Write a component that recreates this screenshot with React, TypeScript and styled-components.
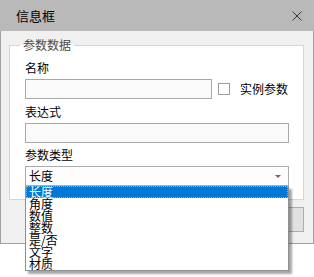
import React from "react";
import styled, { createGlobalStyle } from "styled-components";

const GlobalStyle = createGlobalStyle`
  html, body {
    margin: 0;
    padding: 0;
    background: #ffffff;
  }
  body {
    font-family: "Noto Sans CJK SC", "Noto Sans", sans-serif;
    font-size: 12px;
    color: #000;
  }
  * { box-sizing: border-box; }
`;

const TYPES = ["长度", "角度", "数值", "整数", "是/否", "文字", "材质"];

const App: React.FC = () => {
  return (
    <>
      <GlobalStyle />
      <Page>
        <Window>
          <TitleBar>
            <Title>信息框</Title>
            <CloseButton aria-label="close">
              <svg width="10" height="10" viewBox="0 0 10 10">
                <path d="M0.5 0.5 L9.5 9.5 M9.5 0.5 L0.5 9.5" stroke="#333" strokeWidth="1" />
              </svg>
            </CloseButton>
          </TitleBar>
          <Body>
            <Group>
              <Legend>参数数据</Legend>
              <Label gap="8px">名称</Label>
              <NameRow>
                <TextInput width="187px" />
                <CheckBox />
                <CheckLabel>实例参数</CheckLabel>
              </NameRow>
              <Label gap="5px">表达式</Label>
              <TextInput />
              <Label gap="4px">参数类型</Label>
              <SelectWrap>
                <SelectBox>
                  <span>长度</span>
                  <Arrow />
                </SelectBox>
                <DropList>
                  {TYPES.map((t, i) => (
                    <DropItem key={t} selected={i === 0}>
                      {t}
                    </DropItem>
                  ))}
                </DropList>
              </SelectWrap>
            </Group>
            <ButtonRow>
              <Button>确定</Button>
              <Button>取消</Button>
            </ButtonRow>
          </Body>
        </Window>
      </Page>
    </>
  );
};

export default App;

const Page = styled.div`
  width: 314px;
  min-height: 277px;
  background: #fff;
`;

const Window = styled.div`
  width: 314px;
`;

const TitleBar = styled.div`
  height: 31px;
  background: #b9b9b9;
  display: flex;
  align-items: center;
  justify-content: space-between;
  padding: 0 12px 0 16px;
`;

const Title = styled.div`
  font-size: 13px;
  line-height: 16px;
  color: #000;
`;

const CloseButton = styled.div`
  width: 10px;
  height: 10px;
  display: flex;
  svg { display: block; }
`;

const Body = styled.div`
  height: 213px;
  background: #f0f0f0;
  border: 1px solid #a0a0a0;
  border-top: none;
  padding: 14px 9px 0 8px;
`;

const Group = styled.div`
  position: relative;
  z-index: 2;
  width: 295px;
  background: #fff;
  border: 1px solid #d5d5d5;
  padding: 0 14px 13px 15px;
  display: flex;
  flex-direction: column;
`;

const Legend = styled.div`
  align-self: flex-start;
  margin: -8px 0 0 -5px;
  padding: 0 3px;
  font-size: 12px;
  line-height: 14px;
  color: #4a4a4a;
  background: linear-gradient(#f0f0f0 7px, #fff 7px);
`;

const Label = styled.div<{ gap?: string }>`
  margin-top: ${({ gap }) => gap || "0"};
  margin-bottom: 3px;
  line-height: 16px;
  font-size: 12px;
`;

const NameRow = styled.div`
  display: flex;
  align-items: center;
`;

const TextInput = styled.div<{ width?: string }>`
  width: ${({ width }) => width || "100%"};
  height: 20px;
  border: 1px solid #a9a9a9;
  background: #fafafa;
  flex-shrink: 0;
`;

const CheckBox = styled.div`
  width: 12px;
  height: 12px;
  margin-left: 6px;
  border: 1px solid #9c9c9c;
  background: #fff;
`;

const CheckLabel = styled.span`
  margin-left: 10px;
  line-height: 16px;
`;

const SelectWrap = styled.div`
  position: relative;
`;

const SelectBox = styled.div`
  height: 20px;
  border: 1px solid #acacac;
  background: #fdfdfd;
  display: flex;
  align-items: center;
  justify-content: space-between;
  padding: 0 7px 0 3px;
  line-height: 16px;
`;

const Arrow = styled.div`
  width: 0;
  height: 0;
  border-left: 3px solid transparent;
  border-right: 3px solid transparent;
  border-top: 3px solid #6a6a6a;
  margin-top: 1px;
`;

const DropList = styled.div`
  position: absolute;
  left: 0;
  top: 20px;
  width: 264px;
  background: #fff;
  border: 1px solid #8f8f8f;
  border-top: none;
  box-shadow: 3px 3px 2px rgba(0, 0, 0, 0.35);
  z-index: 10;
`;

const DropItem = styled.div<{ selected?: boolean }>`
  height: 12px;
  line-height: 12px;
  font-size: 12px;
  padding-left: 3px;
  background: ${({ selected }) => (selected ? "#0078d7" : "transparent")};
  color: ${({ selected }) => (selected ? "#fff" : "#000")};
  outline: ${({ selected }) => (selected ? "1px dotted #f0a030" : "none")};
  outline-offset: -1px;
  white-space: nowrap;
`;

const ButtonRow = styled.div`
  display: flex;
  justify-content: flex-end;
  gap: 12px;
  width: 295px;
  margin-top: 7px;
`;

const Button = styled.div`
  width: 75px;
  height: 25px;
  border: 1px solid #adadad;
  background: #e1e1e1;
  display: flex;
  align-items: center;
  justify-content: center;
`;
